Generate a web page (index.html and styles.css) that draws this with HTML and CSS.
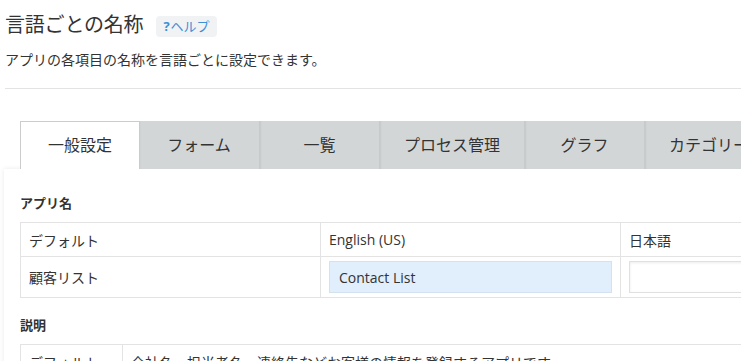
FILE: index.html
```html
<!DOCTYPE html>
<html lang="ja">
<head>
    <meta charset="UTF-8">
    <meta name="viewport" content="width=device-width, initial-scale=1.0">
    <title>言語ごとの名称</title>
    <link rel="stylesheet" href="styles.css">
</head>
<body>
    <div class="page">
        <div class="title-row">
            <h1 class="title">言語ごとの名称</h1>
            <span class="help"><b>?</b>ヘルプ</span>
        </div>
        <p class="lead">アプリの各項目の名称を言語ごとに設定できます。</p>
        <hr class="rule">

        <div class="tabs">
            <div class="tab active">一般設定</div>
            <div class="tab">フォーム</div>
            <div class="tab">一覧</div>
            <div class="tab">プロセス管理</div>
            <div class="tab">グラフ</div>
            <div class="tab">カテゴリー</div>
        </div>

        <div class="panel">
            <h3 class="section">アプリ名</h3>
            <table class="names">
                <tr>
                    <td class="col-a">デフォルト</td>
                    <td class="col-b">English (US)</td>
                    <td class="col-c">日本語</td>
                </tr>
                <tr>
                    <td class="col-a">顧客リスト</td>
                    <td class="col-b input-cell"><input class="field filled" type="text" value="Contact List"></td>
                    <td class="col-c input-cell"><input class="field" type="text" value=""></td>
                </tr>
            </table>

            <h3 class="section">説明</h3>
            <table class="names">
                <tr>
                    <td class="col-short">デフォルト</td>
                    <td>会社名、担当者名、連絡先などお客様の情報を登録するアプリです。</td>
                </tr>
            </table>
        </div>
    </div>
</body>
</html>
```

FILE: styles.css
```css
body {
    margin: 0;
    overflow: hidden;
    font-family: "Open Sans", "Noto Sans CJK JP", sans-serif;
    color: #333;
    background: #fff;
}
.page {
    padding: 10px 0 0 5px;
    width: 1000px;
}
.title-row {
    display: flex;
    align-items: center;
    height: 30px;
}
.title {
    margin: 0;
    font-size: 20px;
    font-weight: normal;
    line-height: 30px;
    letter-spacing: -0.2px;
}
.help {
    margin-left: 13px;
    margin-top: 2px;
    padding: 0 7px;
    height: 21px;
    line-height: 21px;
    border-radius: 4px;
    background: #f0f2f4;
    color: #3d8fd6;
    font-size: 13px;
}
.help b {
    margin-right: 1px;
}
.lead {
    margin: 10px 0 0;
    font-size: 14px;
    line-height: 20px;
}
.rule {
    margin: 18px 0 0;
    border: 0;
    border-top: 1px solid #e3e3e3;
}
.tabs {
    display: flex;
    margin: 32px 0 0 15px;
}
.tab {
    min-width: 120px;
    box-sizing: border-box;
    height: 48px;
    padding: 0 24px;
    text-align: center;
    font-size: 16px;
    line-height: 48px;
    background: #d3d6d7;
    border-left: 1px solid #c7cacb;
    box-shadow: inset 2px 0 2px -1px rgba(0, 0, 0, 0.06);
    white-space: nowrap;
}
.tab.active {
    background: #fff;
    border-top: 1px solid #ccc;
    border-left: 1px solid #ccc;
    box-shadow: none;
    line-height: 46px;
    width: 119px;
    min-width: 119px;
    position: relative;
    z-index: 1;
}
.tab.active + .tab {
    border-left: 0;
}
.panel {
    margin-left: -1px;
    padding: 24px 16px 0;
    background: #fff;
    box-shadow: 0 0 5px rgba(0, 0, 0, 0.09);
}
.section {
    margin: 0 0 9px;
    font-size: 13px;
    font-weight: bold;
    line-height: 20px;
}
.names + .section {
    margin-top: 17px;
}
.names {
    border-collapse: collapse;
    width: 930px;
    font-size: 14px;
}
.names td {
    border: 1px solid #e3e3e3;
    padding: 0 8px;
    height: 33px;
    white-space: nowrap;
}
.col-a,
.col-b {
    width: 283px;
}
.col-short {
    width: 85px;
}
.names td.input-cell {
    height: 32px;
    padding: 4px 8px;
}
.field {
    display: block;
    box-sizing: border-box;
    width: 100%;
    height: 32px;
    padding: 0 9px;
    font: inherit;
    font-size: 14px;
    color: #333;
    border: 1px solid #e0e0e0;
    background: #fff;
    box-shadow: inset 0 1px 3px rgba(0, 0, 0, 0.08);
    outline: none;
}
.field.filled {
    background: #e1eefb;
    border-color: #d3e2ef;
    box-shadow: none;
}
```
